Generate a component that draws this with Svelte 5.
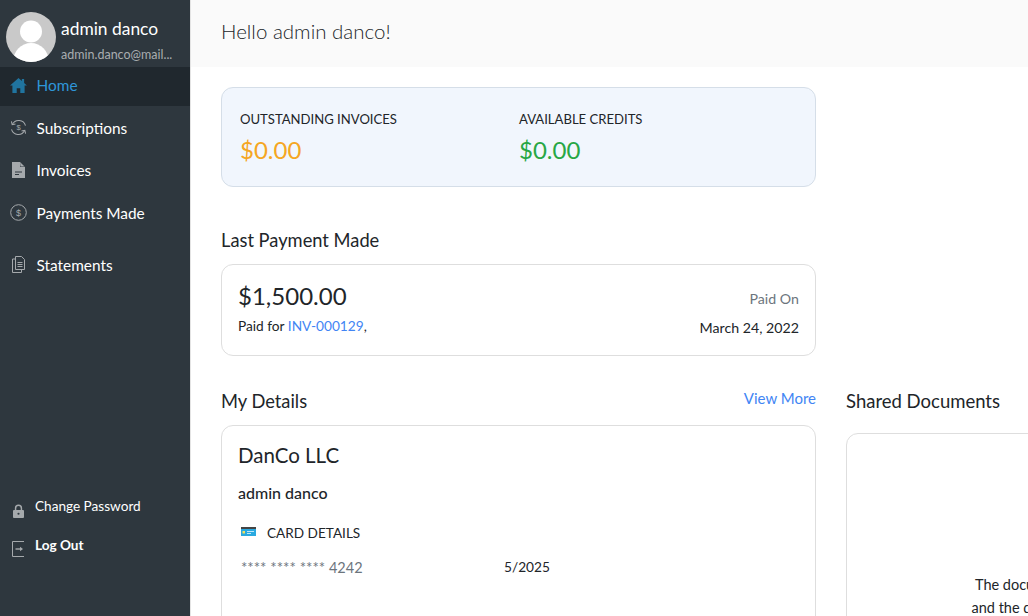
<script>
  const nav = [
    { label: "Home", icon: "home", active: true },
    { label: "Subscriptions", icon: "subs" },
    { label: "Invoices", icon: "invoice" },
    { label: "Payments Made", icon: "payment" },
    { label: "Statements", icon: "statement", gap: true },
  ];
</script>

<div class="shell">
  <aside class="sidebar">
    <div class="profile">
      <svg class="avatar" viewBox="0 0 50 50" width="50" height="50">
        <circle cx="25" cy="25" r="25" fill="#c9c9c9" />
        <clipPath id="av"><circle cx="25" cy="25" r="25" /></clipPath>
        <g clip-path="url(#av)" fill="#fff">
          <circle cx="25" cy="19.500" r="11" />
          <ellipse cx="25" cy="50" rx="18" ry="19" />
        </g>
      </svg>
      <div class="who">
        <div class="name">admin danco</div>
        <div class="email">admin.danco@mail...</div>
      </div>
    </div>

    <nav>
      {#each nav as item}
        <a class="item" class:active={item.active} class:spaced={item.gap} href="#{item.icon}">
          <span class="ico">
            {#if item.icon === "home"}
              <svg viewBox="0 0 18 16" width="17" height="15"><path fill="#20749f" d="M9 0 0 8h2.500v8h4.600v-5h3.800v5h4.600V8H18l-3-2.700V1h-2.400v2.200z" /></svg>
            {:else if item.icon === "subs"}
              <svg viewBox="0 0 18 18" width="17" height="17" fill="none" stroke="#a5a9ac" stroke-width="1.100"><path d="M2.500 5.800A7.500 7.500 0 0 1 16.400 7M15.500 12.200A7.500 7.500 0 0 1 1.600 11" /><path d="M1.500 2.500 2.300 6l3.500-.8M16.500 15.500 15.700 12l-3.500.8" /><text x="9" y="12" font-size="8" text-anchor="middle" fill="#a5a9ac" stroke="none" font-family="Liberation Sans">$</text></svg>
            {:else if item.icon === "invoice"}
              <svg class="inset" viewBox="0 0 13 16" width="13" height="16"><path fill="#a5a9ac" d="M0 0h8l5 5v11H0z" /><path fill="#2e373e" d="M8.500 0v4.500H13V5H8z" /><path stroke="#2e373e" d="M3 10h7M3 12.500h4" /></svg>
            {:else if item.icon === "payment"}
              <svg viewBox="0 0 17 17" width="17" height="17"><circle cx="8.500" cy="8.500" r="7.800" fill="none" stroke="#a5a9ac" /><text x="8.500" y="12" font-size="9" text-anchor="middle" fill="#a5a9ac" font-family="Liberation Sans">$</text></svg>
            {:else}
              <svg class="inset" viewBox="0 0 13 17" width="13" height="17" fill="none" stroke="#a5a9ac"><path d="M3.500 .5h6l3 3v10h-9z" /><path d="M3.500 3H.5v13.500h9v-3M5.500 6.500h5M5.500 8.500h5M5.500 10.500h5" /></svg>
            {/if}
          </span>
          <span>{item.label}</span>
        </a>
      {/each}
    </nav>

    <div class="bottom">
      <a class="foot" href="#pw">
        <svg class="lock" viewBox="0 0 12 15" width="11" height="14"><path fill="none" stroke="#a5a9ac" stroke-width="1.600" d="M2.800 7V4.500a3.200 3.200 0 0 1 6.400 0V7" /><rect y="6.500" width="12" height="8.500" rx="1" fill="#a5a9ac" /><circle cx="6" cy="10.500" r="1.200" fill="#2e373e" /></svg>
        <span>Change Password</span>
      </a>
      <a class="foot strong" href="#out">
        <svg class="exit" viewBox="0 0 13 16" width="13" height="16" fill="none" stroke="#a5a9ac"><path d="M12 .5H.5v15H12" /><path d="M3.500 8H9" stroke-width="1.400" /><path d="M8 5.800 11 8l-3 2.200z" fill="#a5a9ac" stroke="none" /></svg>
        <span>Log Out</span>
      </a>
    </div>
  </aside>

  <main>
    <header class="topbar">Hello admin danco!</header>
    <div class="content">
      <section class="balance">
        <div>
          <div class="cap">OUTSTANDING INVOICES</div>
          <div class="amt orange">$0.00</div>
        </div>
        <div>
          <div class="cap">AVAILABLE CREDITS</div>
          <div class="amt green">$0.00</div>
        </div>
      </section>

      <h3 class="title last">Last Payment Made</h3>
      <section class="card payment">
        <div>
          <div class="big">$1,500.00</div>
          <div class="paid">Paid for <a href="#inv">INV-000129</a>,</div>
        </div>
        <div class="when">
          <div class="muted">Paid On</div>
          <div class="date">March 24, 2022</div>
        </div>
      </section>

      <div class="columns">
        <div class="col">
          <div class="head">
            <h3 class="title">My Details</h3>
            <a class="more" href="#more">View More</a>
          </div>
          <section class="card details">
            <div class="company">DanCo LLC</div>
            <div class="person">admin danco</div>
            <div class="cardhead">
              <svg viewBox="0 0 15 9" width="15" height="9"><rect width="15" height="9" fill="#29a9e0" /><rect width="15" height="2" fill="#444" /><rect x="1.500" y="4" width="2.500" height="2.500" fill="#f0e060" /><path d="M6 4.500h7M6 6.500h4" stroke="#bfe6f7" /></svg>
              <span>CARD DETAILS</span>
            </div>
            <div class="cardrow">
              <span class="num"><span class="stars">**** **** ****</span> 4242</span>
              <span class="exp">5/2025</span>
            </div>
          </section>
        </div>
        <div class="col">
          <div class="head"><h3 class="title wide">Shared Documents</h3></div>
          <section class="card docs">
            <p>The documents you've shared will be displayed here<br />and the documents can be accessed here at all times.</p>
          </section>
        </div>
      </div>
    </div>
  </main>
</div>

<style>
  :global(body) { margin: 0; overflow: hidden; background: #fff; }
  a { text-decoration: none; }
  h3 { margin: 0; }

  .shell {
    display: flex;
    width: 1028px;
    height: 616px;
    overflow: hidden;
    font-family: "Lato", "Noto Sans", sans-serif;
    color: #212529;
  }

  .sidebar {
    flex: 0 0 190px;
    display: flex;
    flex-direction: column;
    background: #2e373e;
    border-right: 1px solid #e4e4e4;
    color: #fff;
  }
  .profile {
    display: flex;
    gap: 5px;
    height: 67px;
    padding: 12px 0 0 6px;
    box-sizing: border-box;
  }
  .avatar { flex: none; }
  .name { font-size: 17.400px; line-height: 20px; margin-top: 7px; }
  .email { font-size: 12.500px; line-height: 16px; color: #a9adb0; margin-top: 8px; white-space: nowrap; }

  .item {
    display: flex;
    align-items: center;
    box-sizing: border-box;
    height: 39px;
    margin-bottom: 3.600px;
    padding: 0 0 3px 10px;
    font-size: 15.400px;
    color: #fff;
  }
  .item.active { background: #20282e; color: #2e96d8; }
  .item.spaced { margin-top: 13px; }
  .ico { width: 26.500px; display: flex; align-items: center; flex: none; }
  .inset { margin-left: 2px; }

  .bottom { margin-top: auto; padding-bottom: 50px; }
  .foot {
    display: flex;
    align-items: center;
    height: 39px;
    padding-left: 13px;
    gap: 11px;
    font-size: 13.600px;
    color: #fff;
  }
  .foot.strong { font-weight: 700; padding-left: 12px; gap: 10px; }
  .lock { margin-top: 7px; }
  .exit { margin-top: 4px; }
  .foot span { margin-top: -4px; }

  main { flex: 1; min-width: 0; }
  .topbar {
    height: 67px;
    background: #fafafa;
    padding-left: 30px;
    font-size: 20.500px;
    line-height: 62px;
    font-weight: 300;
    color: #212529;
  }
  .content { padding: 20px 0 0 30px; width: 1220px; }

  .balance {
    display: grid;
    grid-template-columns: 279px 1fr;
    width: 595px;
    height: 100px;
    box-sizing: border-box;
    padding: 23px 18px 0;
    background: #f1f6fd;
    border: 1px solid #d5dee8;
    border-radius: 12px;
  }
  .cap { font-size: 13.100px; line-height: 16px; }
  .amt { font-size: 24px; line-height: 30px; margin-top: 8px; }
  .orange { color: #f5a623; }
  .green { color: #28a745; }

  .title { font-size: 18.300px; line-height: 24px; font-weight: 400; padding-top: 1px; }
  .wide { font-size: 18.500px; }
  .last { margin-top: 40px; }

  .card {
    box-sizing: border-box;
    width: 595px;
    background: #fff;
    border: 1px solid #dedede;
    border-radius: 12px;
  }
  .payment {
    display: flex;
    justify-content: space-between;
    height: 92px;
    margin-top: 12px;
    padding: 15px 16px 0;
  }
  .big { font-size: 24px; line-height: 32px; }
  .paid { font-size: 13.700px; line-height: 18px; margin-top: 5px; }
  .paid a { color: #4285f4; }
  .when { text-align: right; font-size: 14.200px; }
  .muted { color: #6c757d; line-height: 18px; margin-top: 10px; }
  .date { line-height: 18px; margin-top: 11px; }

  .columns {
    display: grid;
    grid-template-columns: 595px 595px;
    column-gap: 30px;
    margin-top: 32px;
  }
  .head {
    display: flex;
    justify-content: space-between;
    height: 26px;
  }
  .more { color: #4285f4; font-size: 15px; line-height: 20px; }

  .details {
    height: 210px;
    margin-top: 11px;
    padding: 16px 16px;
  }
  .company { font-size: 20.500px; line-height: 26px; }
  .person { font-size: 16px; font-weight: 500; line-height: 20px; margin-top: 15px; }
  .cardhead {
    display: flex;
    align-items: center;
    gap: 11px;
    margin: 20px 0 0 3px;
    font-size: 13.600px;
    line-height: 20px;
  }
  .cardhead svg { margin-top: -4px; }
  .cardrow { display: flex; margin: 14px 0 0 3px; font-size: 14.500px; line-height: 20px; }
  .num { width: 263px; color: #6c757d; white-space: nowrap; }
  .stars { font-size: 15px; }
  .exp { font-size: 13.700px; color: #212529; }

  .docs { height: 240px; margin-top: 19px; text-align: center; white-space: nowrap; }
  .docs p { margin: 139px 0 0; padding-right: 8px; font-size: 14.500px; line-height: 23px; }
</style>
